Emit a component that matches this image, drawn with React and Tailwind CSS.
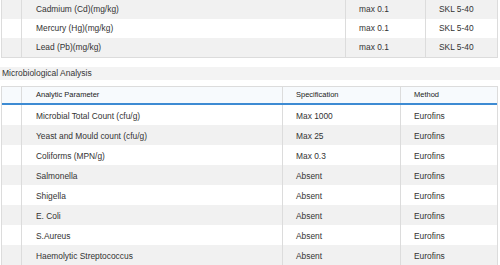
const heavyMetals = [
  { name: "Cadmium (Cd)(mg/kg)", spec: "max 0.1", method: "SKL 5-40" },
  { name: "Mercury (Hg)(mg/kg)", spec: "max 0.1", method: "SKL 5-40" },
  { name: "Lead (Pb)(mg/kg)", spec: "max 0.1", method: "SKL 5-40" },
];

const micro = [
  { name: "Microbial Total Count (cfu/g)", spec: "Max 1000" },
  { name: "Yeast and Mould count (cfu/g)", spec: "Max 25" },
  { name: "Coliforms (MPN/g)", spec: "Max 0.3" },
  { name: "Salmonella", spec: "Absent" },
  { name: "Shigella", spec: "Absent" },
  { name: "E. Coli", spec: "Absent" },
  { name: "S.Aureus", spec: "Absent" },
  { name: "Haemolytic Streptococcus", spec: "Absent" },
];

export default function App() {
  return (
    <div
      className="w-[500px] h-[265px] overflow-hidden bg-white text-[#333]"
      style={{ fontFamily: '"Liberation Sans", Arial, sans-serif' }}
    >
      {/* heavy metals table (cut at top) */}
      <div className="ml-[1px] w-[497px] border-x border-b border-[#dcdcdc] text-[8.4px]">
        {heavyMetals.map((row, i) => (
          <div
            key={row.name}
            className={`flex h-[19px] ${i % 2 === 0 ? "bg-[#f1f1f1]" : "bg-white"}`}
          >
            <div className="w-[20px] border-r border-[#dcdcdc]" />
            <div className="w-[323px] flex items-center pl-[14px]">{row.name}</div>
            <div className="w-[80px] flex items-center pl-[13px] border-l border-[#dcdcdc]">
              {row.spec}
            </div>
            <div className="flex-1 flex items-center pl-[13px] border-l border-[#dcdcdc]">
              {row.method}
            </div>
          </div>
        ))}
      </div>

      <div className="mt-[9px] h-[13px] bg-[#f3f3f3] flex items-center pl-[2px] text-[8.5px]">
        Microbiological Analysis
      </div>

      {/* microbiological table */}
      <div className="mt-[6px] ml-[1px] w-[497px] border-x border-t border-[#dcdcdc]">
        <div className="flex h-[16px] bg-[#f7fafd] text-[7.5px] text-[#222] border-b-2 border-[#3d8bd3] box-content">
          <div className="w-[20px] border-r border-[#dcdcdc]" />
          <div className="w-[260px] flex items-center pl-[14px]">Analytic Parameter</div>
          <div className="w-[118px] flex items-center pl-[13px] border-l border-[#dcdcdc]">
            Specification
          </div>
          <div className="flex-1 flex items-center pl-[13px] border-l border-[#dcdcdc]">Method</div>
        </div>
        <div className="text-[8.4px]">
          {micro.map((row, i) => (
            <div
              key={row.name}
              className={`flex h-[20px] ${i % 2 === 1 ? "bg-[#f1f1f1]" : "bg-white"}`}
            >
              <div className="w-[20px] border-r border-[#dcdcdc]" />
              <div className="w-[260px] flex items-center pl-[14px] pt-[2px]">{row.name}</div>
              <div className="w-[118px] flex items-center pl-[13px] pt-[2px] border-l border-[#dcdcdc]">
                {row.spec}
              </div>
              <div className="flex-1 flex items-center pl-[13px] pt-[2px] border-l border-[#dcdcdc]">
                Eurofins
              </div>
            </div>
          ))}
        </div>
      </div>
    </div>
  );
}
